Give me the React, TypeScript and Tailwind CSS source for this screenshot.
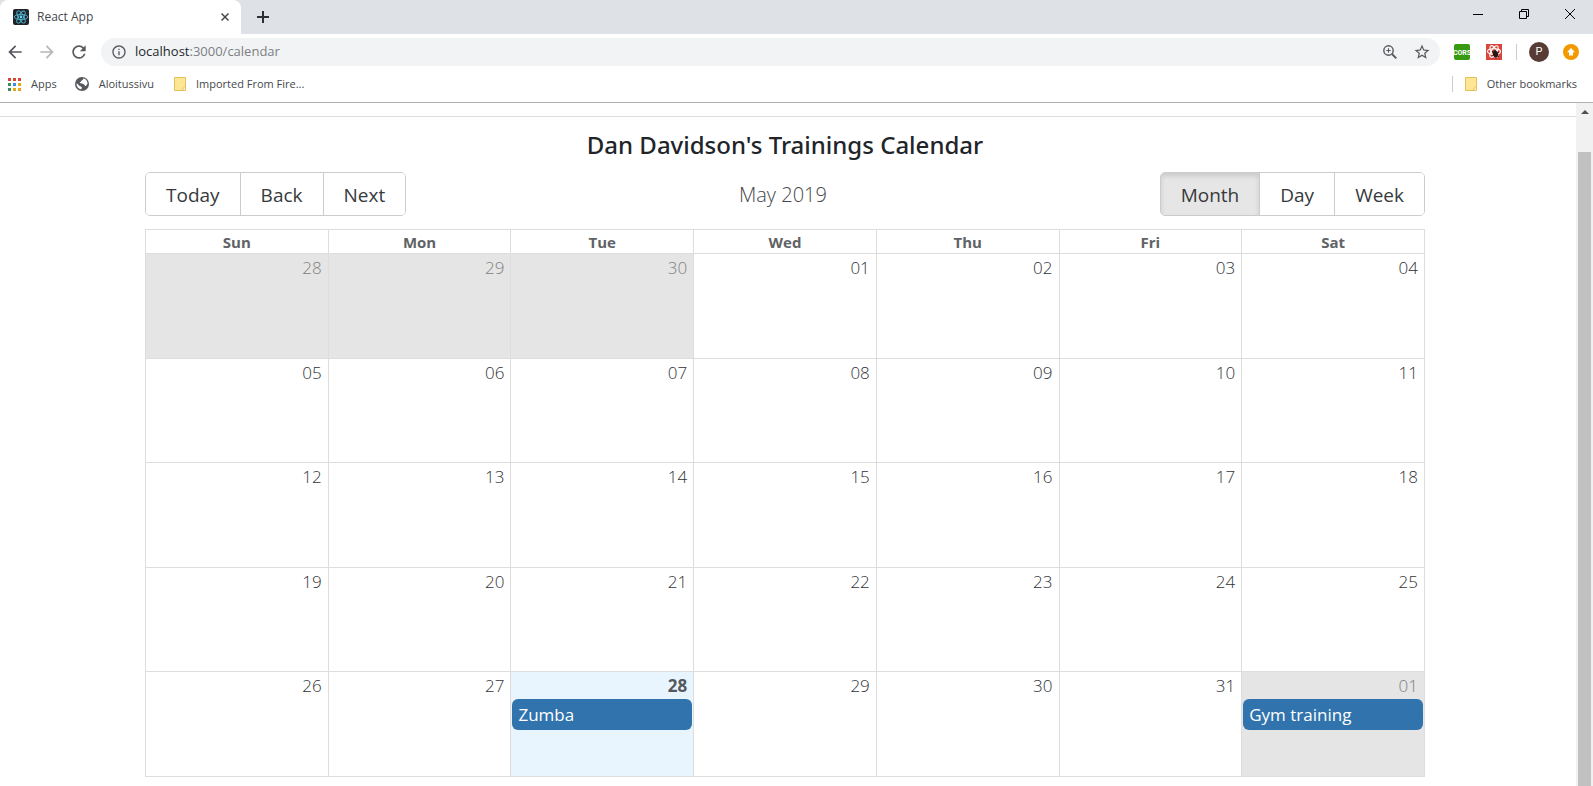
import React from "react";
import {
  MdArrowBack,
  MdArrowForward,
  MdInfoOutline,
  MdRefresh,
  MdStarBorder,
} from "react-icons/md";

type Day = { label: string; off?: boolean; today?: boolean; event?: string };

const weekdays = ["Sun", "Mon", "Tue", "Wed", "Thu", "Fri", "Sat"];

const pad = (n: number) => String(n).padStart(2, "0");

const days: Day[] = [
  ...[28, 29, 30].map((n) => ({ label: pad(n), off: true })),
  ...Array.from({ length: 31 }, (_, i) => ({
    label: pad(i + 1),
    today: i + 1 === 28,
    event: i + 1 === 28 ? "Zumba" : undefined,
  })),
  { label: "01", off: true, event: "Gym training" },
];

const weeks = [0, 1, 2, 3, 4].map((w) => days.slice(w * 7, w * 7 + 7));

function ReactLogo() {
  return (
    <svg viewBox="0 0 16 16" className="size-4" aria-hidden="true">
      <rect width="16" height="16" rx="2" fill="#20232a" />
      <g fill="none" stroke="#4fb3cc" strokeWidth="0.9">
        <ellipse cx="8" cy="8" rx="6.8" ry="2.6" />
        <ellipse cx="8" cy="8" rx="6.8" ry="2.6" transform="rotate(60 8 8)" />
        <ellipse cx="8" cy="8" rx="6.8" ry="2.6" transform="rotate(120 8 8)" />
      </g>
      <circle cx="8" cy="8" r="1.4" fill="#61dafb" />
    </svg>
  );
}

function AppsGrid() {
  const colors = ["#db4437", "#db4437", "#db4437", "#3c8f5a", "#4285f4", "#e8a812", "#3c8f5a", "#e8a812", "#e8a812"];
  return (
    <svg viewBox="0 0 13 13" className="size-[13px]" aria-hidden="true">
      {colors.map((c, i) => (
        <rect key={i} x={(i % 3) * 5} y={Math.floor(i / 3) * 5} width="3" height="3" fill={c} />
      ))}
    </svg>
  );
}

function GlobeIcon() {
  return (
    <svg viewBox="0 0 14 14" className="size-3.5" aria-hidden="true">
      <circle cx="7" cy="7" r="7" fill="#55585c" />
      <path
        d="M8.200 1.300C9 2 8 2.800 7 3.200 6 3.600 6.600 4.600 5.400 4.900 4.300 5.200 4.800 6.200 6 6.200c1.600 0 2 .8 3 1.200 1.200.4.600 1.600 1.700 1.500 1.200-.2 1.200-1.600 1.900-2.300C12.500 4 10.800 1.700 8.200 1.300zM1.400 6.200C1.500 9.500 3.500 11.900 6.300 12.500 6.200 11.500 7.400 11 6.600 9.900 5.800 9 4.600 9.400 4 8.400 3.400 7.400 2.400 7 1.400 6.200z"
        fill="#fff"
      />
    </svg>
  );
}

function Folder() {
  return (
    <svg viewBox="0 0 12 14" className="h-3.5 w-3" aria-hidden="true">
      <path d="M.5.5h11v13H.5z" fill="#ffe694" stroke="#e3c05a" />
      <path d="M11.500 9.500v4h-2.500v-2.500z" fill="#fff0b8" stroke="#e3c05a" strokeWidth="0.8" />
    </svg>
  );
}

function CorsIcon() {
  return (
    <svg viewBox="0 0 16 16" className="size-4" aria-hidden="true">
      <rect width="16" height="16" rx="2" fill="#389a12" />
      <text
        x="8"
        y="10.500"
        textAnchor="middle"
        fontSize="7"
        fontWeight="700"
        fontFamily="'Liberation Sans Narrow', Roboto, sans-serif"
        fill="#fff"
      >
        CORS
      </text>
    </svg>
  );
}

function DevtoolsIcon() {
  return (
    <svg viewBox="0 0 16 16" className="size-4" aria-hidden="true">
      <rect width="16" height="16" fill="#d9453c" />
      <g fill="none" stroke="#fff" strokeWidth="1.100">
        <ellipse cx="8" cy="7.500" rx="6.500" ry="2.700" />
        <ellipse cx="8" cy="7.500" rx="6.500" ry="2.700" transform="rotate(60 8 7.500)" />
        <ellipse cx="8" cy="7.500" rx="6.500" ry="2.700" transform="rotate(120 8 7.500)" />
      </g>
      <ellipse cx="9.500" cy="10" rx="2.700" ry="3.500" fill="#2b1513" transform="rotate(-25 9.500 10)" />
      <path d="M6 7l7 6M6 12l7-4M9 5.500l1 9" stroke="#2b1513" strokeWidth="0.9" />
    </svg>
  );
}

function ZoomIcon() {
  return (
    <svg viewBox="0 0 14 14" className="size-3.5" fill="none" stroke="currentColor" aria-hidden="true">
      <circle cx="5.500" cy="5.500" r="4.700" strokeWidth="1.400" />
      <path d="M9 9l4.300 4.300" strokeWidth="1.800" />
      <path d="M3.300 5.500h4.400M5.500 3.300v4.400" strokeWidth="1.100" />
    </svg>
  );
}

function TabStrip() {
  return (
    <div className="flex h-[34px] items-stretch bg-[#dee1e6]">
      <div className="flex w-[241px] items-center rounded-t-lg bg-white pr-2 pl-[13px]">
        <ReactLogo />
        <span className="ml-2 flex-1 text-xs text-[#45484c]">React App</span>
        <button aria-label="Close tab" className="p-1">
          <svg viewBox="0 0 8 8" className="size-2" stroke="#45484c" strokeWidth="1.500">
            <path d="M.5.5l7 7M7.500.5l-7 7" />
          </svg>
        </button>
      </div>
      <button aria-label="New tab" className="px-4">
        <svg viewBox="0 0 12 12" className="size-3" stroke="#2d3034" strokeWidth="2">
          <path d="M6 0v12M0 6h12" />
        </svg>
      </button>
      <div className="ml-auto flex items-center gap-9 pr-[18px] pb-1.5">
        <button aria-label="Minimize">
          <svg viewBox="0 0 10 10" className="size-2.5" stroke="#000">
            <path d="M0 5.500h10" />
          </svg>
        </button>
        <button aria-label="Restore">
          <svg viewBox="0 0 10 10" className="size-2.5" fill="none" stroke="#000">
            <path d="M.5 2.500h7v7h-7zM2.500 2.500v-2h7v7h-2" />
          </svg>
        </button>
        <button aria-label="Close">
          <svg viewBox="0 0 10 10" className="size-2.5" stroke="#000">
            <path d="M0 0l10 10M10 0L0 10" />
          </svg>
        </button>
      </div>
    </div>
  );
}

function Toolbar() {
  return (
    <div className="flex h-9 items-center pr-3.5 pl-[5px] text-[#55585c]">
      <button aria-label="Back">
        <MdArrowBack className="size-5" />
      </button>
      <button aria-label="Forward" className="ml-3 text-[#b5b7ba]">
        <MdArrowForward className="size-5" />
      </button>
      <button aria-label="Reload" className="ml-3">
        <MdRefresh className="size-5" />
      </button>
      <div className="ml-3 flex h-7 flex-1 items-center rounded-full bg-[#f1f3f4] pr-[9px] pl-2.5">
        <MdInfoOutline className="size-4" />
        <a href="#calendar" className="ml-2 flex-1 text-[13px] text-[#7c8084]">
          <span className="text-[#25282c]">localhost</span>:3000/calendar
        </a>
        <button aria-label="Zoom">
          <ZoomIcon />
        </button>
        <button aria-label="Bookmark this page" className="ml-4">
          <MdStarBorder className="size-[18px]" />
        </button>
      </div>
      <div className="ml-3.5 flex items-center gap-4">
        <button aria-label="CORS">
          <CorsIcon />
        </button>
        <button aria-label="Developer tools">
          <DevtoolsIcon />
        </button>
      </div>
      <span className="ml-3.5 h-4 w-px bg-[#c9cbce]" />
      <button className="ml-3 size-5 rounded-full bg-[#573b34] font-['Roboto',sans-serif] text-[11px] text-white">P</button>
      <button aria-label="Update" className="ml-3.5">
        <svg viewBox="0 0 16 16" className="size-4">
          <circle cx="8" cy="8" r="8" fill="#f29900" />
          <path d="M8 4l4 4.200h-2v3.300H6V8.200H4z" fill="#fff" />
        </svg>
      </button>
    </div>
  );
}

function Bookmarks() {
  return (
    <div className="flex h-[33px] items-center border-b border-[#aeb0b3] pr-4 pb-1 pl-2 text-[11px] text-[#45484c]">
      <a href="#apps" className="flex items-center gap-2.5">
        <AppsGrid />
        Apps
      </a>
      <a href="#aloitussivu" className="ml-[18px] flex items-center gap-2.5">
        <GlobeIcon />
        Aloitussivu
      </a>
      <a href="#imported" className="ml-5 flex items-center gap-2.5">
        <Folder />
        Imported From Fire...
      </a>
      <span className="ml-auto h-4 w-px bg-[#c9cbce]" />
      <a href="#other" className="ml-3 flex items-center gap-2.5">
        <Folder />
        Other bookmarks
      </a>
    </div>
  );
}

function ButtonGroup({ labels, active }: { labels: string[]; active?: string }) {
  return (
    <div className="flex h-11 divide-x divide-[#ccc] overflow-hidden rounded-[5px] border border-[#ccc] text-[19px] text-[#373a3c]">
      {labels.map((label) => (
        <button
          key={label}
          aria-pressed={label === active}
          className={
            label === active
              ? "bg-[#e6e6e6] px-5 pt-0.5 shadow-[inset_0_3px_5px_rgba(0,0,0,0.125)]"
              : "bg-white px-5 pt-0.5"
          }
        >
          {label}
        </button>
      ))}
    </div>
  );
}

function DayCell({ day }: { day: Day }) {
  const background = day.off ? "bg-[#e5e5e5]" : day.today ? "bg-[#e9f5fe]" : "bg-white";
  const number = day.off
    ? "font-light text-[#808080]"
    : day.today
      ? "font-bold text-[#55585c]"
      : "font-light text-[#303236]";
  return (
    <td className={`h-26 border border-[#ddd] p-0 align-top ${background}`}>
      <div className={`px-1.5 pt-px text-right text-[17px] leading-[26px] ${number}`}>{day.label}</div>
      {day.event && (
        <button className="mx-px block h-[31px] w-[calc(100%-2px)] rounded-md bg-[#3174ad] px-1.5 text-left text-[17px] text-white">
          {day.event}
        </button>
      )}
    </td>
  );
}

function Scrollbar() {
  return (
    <div className="flex w-[17px] flex-col items-center bg-[#f1f1f1]" aria-hidden="true">
      <svg viewBox="0 0 8 4" className="mt-[7px] h-1 w-2" fill="#505050">
        <path d="M4 0l4 4H0z" />
      </svg>
      <div className="mt-[38px] w-[13px] flex-1 bg-[#c1c1c1]" />
    </div>
  );
}

export default function App() {
  return (
    <div className="flex min-h-screen flex-col bg-white font-['Open_Sans','Noto_Sans',sans-serif]">
      <header>
        <TabStrip />
        <Toolbar />
        <Bookmarks />
      </header>
      <div className="flex flex-1">
        <main className="flex-1 pt-[13px]">
          <hr className="border-[#ddd]" />
          <div className="pr-1.5">
            <div className="mx-auto max-w-7xl">
              <h1 className="pt-3 text-center font-['Noto_Sans',sans-serif] text-2xl leading-8 font-medium text-[#212529]">
                Dan Davidson's Trainings Calendar
              </h1>
              <div className="mt-[11px] mb-[13px] flex items-center justify-between">
                <ButtonGroup labels={["Today", "Back", "Next"]} />
                <span className="pt-px text-[20px] font-light text-[#45484c]">May 2019</span>
                <ButtonGroup labels={["Month", "Day", "Week"]} active="Month" />
              </div>
              <table className="h-[548px] w-full table-fixed border-collapse">
                <thead>
                  <tr>
                    {weekdays.map((name) => (
                      <th
                        key={name}
                        scope="col"
                        className="h-6 border border-[#ddd] p-0 text-[15px] leading-5 font-bold text-[#606266]"
                      >
                        {name}
                      </th>
                    ))}
                  </tr>
                </thead>
                <tbody>
                  {weeks.map((week, w) => (
                    <tr key={w}>
                      {week.map((day) => (
                        <DayCell key={day.label} day={day} />
                      ))}
                    </tr>
                  ))}
                </tbody>
              </table>
            </div>
          </div>
        </main>
        <Scrollbar />
      </div>
    </div>
  );
}
